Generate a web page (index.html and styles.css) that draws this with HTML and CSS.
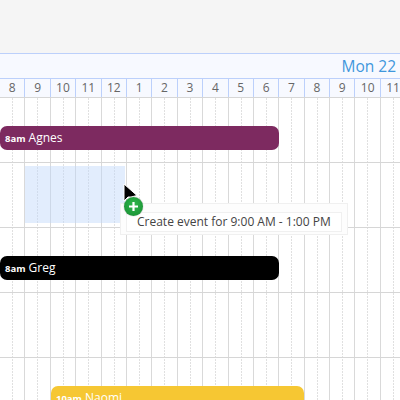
FILE: index.html
```html
<!DOCTYPE html>
<html lang="en">
<head>
  <meta charset="UTF-8" />
  <title>Scheduler</title>
  <link rel="stylesheet" href="styles.css">
</head>
<body>
  <div class="toolbar"></div>
  <div class="day-head"><span class="day-name">Mon 22</span></div>
  <div class="hours">
    <div>8</div><div>9</div><div>10</div><div>11</div><div>12</div><div>1</div><div>2</div><div>3</div>
    <div>4</div><div>5</div><div>6</div><div>7</div><div>8</div><div>9</div><div>10</div><div>11</div>
  </div>

  <div class="timeline">
    <div class="cols">
      <div></div><div></div><div></div><div></div><div></div><div></div><div></div><div></div>
      <div></div><div></div><div></div><div></div><div></div><div></div><div></div><div></div>
    </div>

    <div class="row">
      <div class="event event-purple"><b>8am</b> Agnes</div>
    </div>
    <div class="row">
      <div class="selection"></div>
      <svg class="cursor" width="15" height="21" viewBox="0 0 15 21">
        <path d="M1 1 V18 L5 14 L8 14 L14 12.5 Z" fill="#000" stroke="#fff" stroke-width="1"/>
      </svg>
      <div class="hint"><span>Create event for 9:00 AM - 1:00 PM</span></div>
      <div class="plus">
        <svg width="11" height="11" viewBox="0 0 11 11"><path d="M5.5 1 V10 M1 5.5 H10" stroke="#fff" stroke-width="2.2"/></svg>
      </div>
    </div>
    <div class="row">
      <div class="event event-black"><b>8am</b> Greg</div>
    </div>
    <div class="row"></div>
    <div class="row">
      <div class="event event-yellow"><b>10am</b> Naomi</div>
    </div>
  </div>
</body>
</html>
```

FILE: styles.css
```css
* {
  margin: 0;
  padding: 0;
  box-sizing: border-box;
}

body {
  width: 400px;
  height: 400px;
  overflow: hidden;
  background: #fff;
  font-family: 'Open Sans', sans-serif;
}

.toolbar {
  height: 54px;
  background: #f5f5f5;
  border-bottom: 1px solid #bcd0fb;
}

.day-head {
  height: 25px;
  background: #f7f9ff;
  border-bottom: 1px solid #bcd0fb;
  display: flex;
  justify-content: flex-end;
  align-items: center;
  padding-right: 4px;
}

.day-name {
  color: #3f97dc;
  font-size: 15.5px;
}

.hours {
  height: 19px;
  display: flex;
  background: #f7f9ff;
  border-bottom: 1px solid #d6d6d6;
}

.hours div {
  flex: 0 0 25.4px;
  border-right: 1px solid #bcd0fb;
  color: #666;
  font-size: 12px;
  line-height: 18px;
  text-align: center;
}

.timeline {
  position: relative;
  overflow: hidden;
  height: 303px;
}

.cols {
  position: absolute;
  top: 0;
  left: 0;
  bottom: 0;
  display: flex;
}

.cols div {
  position: relative;
  flex: 0 0 25.4px;
  border-right: 1px solid #d9d9d9;
}

.cols div::after {
  content: '';
  position: absolute;
  top: 0;
  bottom: 0;
  left: 12px;
  width: 1px;
  background: repeating-linear-gradient(to bottom, #e0e0e0 0 2px, transparent 2px 3px);
}

.row {
  position: relative;
  height: 65px;
  border-bottom: 1px solid #d6d6d6;
}

.event {
  position: absolute;
  top: 28px;
  left: 0;
  height: 24px;
  width: 279px;
  padding-left: 5px;
  border-radius: 7px;
  color: #fff;
  font-size: 12px;
  line-height: 24px;
}

.event b {
  font-size: 9.5px;
  margin-right: 0;
}

.event-purple { background: #7d2a60; }
.event-black { background: #000; }

.event-yellow {
  left: 51px;
  width: 253px;
  background: #f6c733;
}

.selection {
  position: absolute;
  top: 3px;
  left: 25px;
  width: 100px;
  height: 57px;
  background: rgba(190, 215, 250, 0.45);
}

.cursor {
  position: absolute;
  top: 20px;
  left: 123px;
}

.hint {
  position: absolute;
  top: 40px;
  left: 120px;
  padding: 8px 5px 2px;
  background: #fdfdfd;
  border: 1px solid #f0f0f0;
  z-index: 1;
}

.hint span {
  display: block;
  width: 216px;
  height: 20px;
  padding-left: 10px;
  background: #fff;
  border: 1px solid #f0f0f0;
  color: #444;
  font-size: 12px;
  line-height: 17px;
  white-space: nowrap;
}

.plus {
  position: absolute;
  top: 34px;
  left: 124px;
  width: 19px;
  height: 19px;
  display: flex;
  align-items: center;
  justify-content: center;
  border-radius: 50%;
  background: radial-gradient(circle at 50% 40%, #2fb84c, #178a30);
  box-shadow: 0 0 1px rgba(0, 0, 0, 0.6);
  z-index: 2;
}
```
